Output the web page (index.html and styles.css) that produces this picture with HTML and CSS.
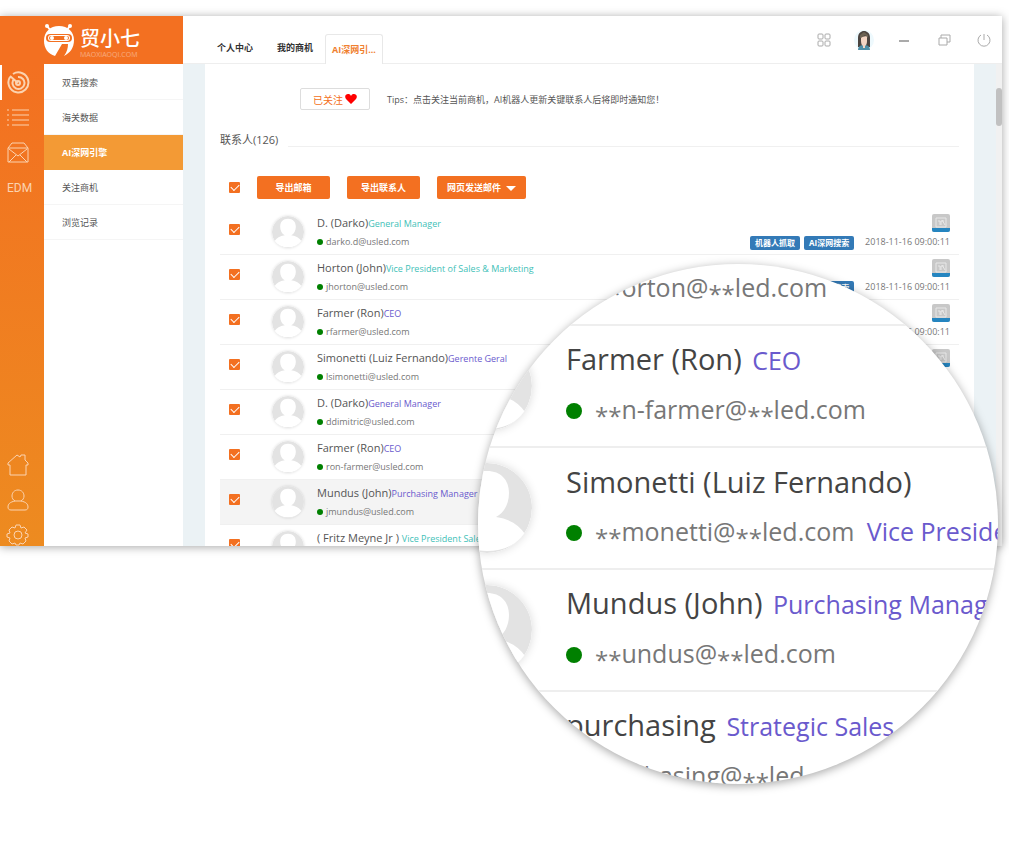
FILE: index.html
```html
<!DOCTYPE html>
<html lang="zh-CN">
<head>
  <meta charset="UTF-8" />
  <meta name="viewport" content="width=device-width, initial-scale=1.0"/>
  <title>贸小七</title>
  <link rel="stylesheet" href="styles.css">
</head>
<body>
  <!-- Shared symbols -->
  <svg class="symbols" aria-hidden="true">
    <symbol id="person" viewBox="0 0 90 90">
      <circle cx="45" cy="45" r="45" fill="#e3e3e3"/>
      <path d="M45 8c14 0 22 9 22 22 0 11-5 20-13 24 14 2 23 8 29 17-9 11-22 17-38 17S16 82 7 71c6-9 15-15 29-17-8-4-13-13-13-24C23 17 31 8 45 8z" fill="#fff"/>
    </symbol>
    <symbol id="card" viewBox="0 0 18 18">
      <rect width="18" height="18" rx="2" fill="#c8c8c8"/>
      <path d="M4 4h10v9H4zM6 7h2v4M10 6l3 5M9 11V7h3" fill="none" stroke="#e8e8e8"/>
      <path d="M0 14h18v2a2 2 0 0 1-2 2H2a2 2 0 0 1-2-2z" fill="#2585c0"/>
    </symbol>
  </svg>

  <div class="stage">
    <div class="app">
      <header class="topbar">
        <a class="logo" href="#">
          <svg width="34" height="34" viewBox="0 0 34 34" fill="#fff">
            <circle cx="5" cy="3" r="2"/>
            <circle cx="28" cy="3" r="2"/>
            <path d="M5 3l4 5M28 3l-4 5" stroke="#fff" stroke-width="2"/>
            <path d="M17 3c9 0 15 6 15 14 0 8-4 13-10 16 3-4 4-8 4-12h-6l-7 12C6 31 2 25 2 18 2 9 8 3 17 3z"/>
            <path d="M8 11h18a4 4 0 0 1 0 8H8a4 4 0 0 1 0-8z" fill="#f37021"/>
            <path d="M9 12h16a3 3 0 0 1 0 6H9a3 3 0 0 1 0-6z"/>
            <path d="M9 13h16a2 2 0 0 1 0 4H9a2 2 0 0 1 0-4z" fill="#f37021"/>
            <circle cx="10" cy="15" r="2"/>
            <circle cx="24" cy="15" r="2"/>
          </svg>
          <span class="logo-text">贸小七<small>MAOXIAOQI.COM</small></span>
        </a>
        <nav class="tabs">
          <a href="#">个人中心</a>
          <a href="#">我的商机</a>
          <a href="#" class="active">AI深网引...</a>
        </nav>
        <div class="tools">
          <button aria-label="应用">
            <svg width="14" height="14" viewBox="0 0 14 14"><rect x="1" y="1" width="5" height="5" rx="1"/><rect x="8" y="1" width="5" height="5" rx="1"/><rect x="1" y="8" width="5" height="5" rx="1"/><rect x="8" y="8" width="5" height="5" rx="1"/></svg>
          </button>
          <button aria-label="用户">
            <svg class="user" width="20" height="20" viewBox="0 0 20 20">
              <circle cx="10" cy="10" r="10" fill="#eef9fd"/>
              <path d="M4 8c0-5 3-7 6-7s6 2 6 7v9H4z" fill="#4b4440"/>
              <path d="M4 20c0-4 3-5 6-5s6 1 6 5z" fill="#4d8fa8"/>
              <path d="M9 12h2v6H9z" fill="#f3d5c4"/>
              <path d="M7 7l6-1v5c0 3-1 5-3 5s-3-2-3-5z" fill="#f3d5c4"/>
              <path d="M6 8c2 0 3-2 5-3 1 1 2 2 3 3V5l-4-3-4 3z" fill="#6b6253"/>
            </svg>
          </button>
          <button aria-label="最小化">
            <svg width="14" height="14" viewBox="0 0 14 14"><path d="M2 8h10" stroke-width="2"/></svg>
          </button>
          <button aria-label="还原">
            <svg width="14" height="14" viewBox="0 0 14 14"><path d="M2 5h8v7H2zM4 5V2h9v7h-3"/></svg>
          </button>
          <button aria-label="退出">
            <svg width="14" height="14" viewBox="0 0 14 14"><path d="M4 2a6 6 0 1 0 6 0M7 1v6"/></svg>
          </button>
        </div>
      </header>

      <div class="body">
        <nav class="rail">
          <a href="#" class="active" aria-label="搜索">
            <svg width="24" height="24" viewBox="0 0 24 24" stroke-width="2"><path d="M4 6a10 10 0 1 0 3-3M8 8a6 6 0 1 0 4-2M4 5l8 7"/><circle cx="12" cy="12" r="2"/></svg>
          </a>
          <a href="#" aria-label="列表">
            <svg width="24" height="24" viewBox="0 0 24 24"><path d="M1 4h2M6 4h17M1 9h2M6 9h17M1 14h2M6 14h17M1 19h2M6 19h17"/></svg>
          </a>
          <a href="#" aria-label="邮件">
            <svg width="24" height="24" viewBox="0 0 24 24"><path d="M2 7l4-5h12l4 5v14H2zM2 7h20M3 8l9 7 9-7M3 21l7-7M21 21l-7-7"/></svg>
          </a>
          <a href="#" class="edm">EDM</a>
          <a href="#" class="home" aria-label="首页">
            <svg width="24" height="24" viewBox="0 0 24 24"><path d="M4 12H2v-2l9-8 3 2 1-2h4v5l3 3v2h-2v10H4z"/></svg>
          </a>
          <a href="#" aria-label="账户">
            <svg width="24" height="24" viewBox="0 0 24 24"><path d="M12 2c4 0 6 3 6 6 0 2-1 4-3 5 5 1 7 3 7 6 0 2-1 3-3 3H5c-2 0-3-1-3-3 0-3 2-5 7-6-2-1-3-3-3-5 0-3 2-6 6-6zM9 13h6"/></svg>
          </a>
          <a href="#" aria-label="设置">
            <svg width="24" height="24" viewBox="0 0 24 24"><path d="M10 2h4l1 3 3-1 3 3-2 3 3 1v3l-3 1 1 3-3 3-3-1-1 2h-3l-1-2-3 1-3-3 1-3-3-1v-3l3-1-1-3 3-3 3 1z"/><circle cx="12" cy="12" r="4"/></svg>
          </a>
        </nav>

        <nav class="menu">
          <a href="#">双喜搜索</a>
          <a href="#">海关数据</a>
          <a href="#" class="active">AI深网引擎</a>
          <a href="#">关注商机</a>
          <a href="#">浏览记录</a>
        </nav>

        <main class="content">
          <section class="panel">
            <div class="follow">
              <button class="follow-btn">已关注<svg width="12" height="10" viewBox="0 0 12 10"><path d="M6 10L1 5C-1 2 1 0 3 0c1 0 2 0 3 2 1-2 2-2 3-2 2 0 4 2 2 5z" fill="#f00"/></svg></button>
              <p>Tips：点击关注当前商机，AI机器人更新关键联系人后将即时通知您！</p>
            </div>
            <h2>联系人(126)</h2>
            <div class="actions">
              <input type="checkbox" aria-label="全选" checked>
              <button>导出邮箱</button>
              <button>导出联系人</button>
              <button class="send">网页发送邮件<span class="caret"></span></button>
            </div>
            <ul class="contacts">
              <li>
                <input type="checkbox" aria-label="D. (Darko)" checked>
                <svg class="avatar"><use href="#person"/></svg>
                <div class="info">
                  <p class="name">D. (Darko)<span class="teal">General Manager</span></p>
                  <p class="mail">darko.d@usled.com</p>
                </div>
                <div class="tags"><span>机器人抓取</span><span>AI深网搜索</span></div>
                <div class="meta"><svg><use href="#card"/></svg><time>2018-11-16 09:00:11</time></div>
              </li>
              <li>
                <input type="checkbox" aria-label="Horton (John)" checked>
                <svg class="avatar"><use href="#person"/></svg>
                <div class="info">
                  <p class="name">Horton (John)<span class="teal">Vice President of Sales &amp; Marketing</span></p>
                  <p class="mail">jhorton@usled.com</p>
                </div>
                <div class="tags"><span>机器人抓取</span><span>AI深网搜索</span></div>
                <div class="meta"><svg><use href="#card"/></svg><time>2018-11-16 09:00:11</time></div>
              </li>
              <li>
                <input type="checkbox" aria-label="Farmer (Ron)" checked>
                <svg class="avatar"><use href="#person"/></svg>
                <div class="info">
                  <p class="name">Farmer (Ron)<span>CEO</span></p>
                  <p class="mail">rfarmer@usled.com</p>
                </div>
                <div class="meta"><svg><use href="#card"/></svg><time>2018-11-16 09:00:11</time></div>
              </li>
              <li>
                <input type="checkbox" aria-label="Simonetti (Luiz Fernando)" checked>
                <svg class="avatar"><use href="#person"/></svg>
                <div class="info">
                  <p class="name">Simonetti (Luiz Fernando)<span>Gerente Geral</span></p>
                  <p class="mail">lsimonetti@usled.com</p>
                </div>
                <div class="meta"><svg><use href="#card"/></svg></div>
              </li>
              <li>
                <input type="checkbox" aria-label="D. (Darko)" checked>
                <svg class="avatar"><use href="#person"/></svg>
                <div class="info">
                  <p class="name">D. (Darko)<span>General Manager</span></p>
                  <p class="mail">ddimitric@usled.com</p>
                </div>
              </li>
              <li>
                <input type="checkbox" aria-label="Farmer (Ron)" checked>
                <svg class="avatar"><use href="#person"/></svg>
                <div class="info">
                  <p class="name">Farmer (Ron)<span>CEO</span></p>
                  <p class="mail">ron-farmer@usled.com</p>
                </div>
              </li>
              <li class="selected">
                <input type="checkbox" aria-label="Mundus (John)" checked>
                <svg class="avatar"><use href="#person"/></svg>
                <div class="info">
                  <p class="name">Mundus (John)<span>Purchasing Manager</span></p>
                  <p class="mail">jmundus@usled.com</p>
                </div>
              </li>
              <li>
                <input type="checkbox" aria-label="Fritz Meyne Jr" checked>
                <svg class="avatar"><use href="#person"/></svg>
                <div class="info">
                  <p class="name">( Fritz Meyne Jr ) <span class="teal">Vice President Sales</span></p>
                </div>
              </li>
            </ul>
          </section>
          <div class="scrollbar"><div class="thumb"></div></div>
        </main>
      </div>
    </div>

    <!-- Magnifier over the contact list -->
    <div class="lens">
      <ul>
        <li>
          <svg class="avatar"><use href="#person"/></svg>
          <div class="info">
            <p class="mail"><i>**</i>orton@<i>**</i>led.com</p>
          </div>
        </li>
        <li>
          <svg class="avatar"><use href="#person"/></svg>
          <div class="info">
            <p class="name">Farmer (Ron) <span>CEO</span></p>
            <p class="mail"><i>**</i>n-farmer@<i>**</i>led.com</p>
          </div>
        </li>
        <li>
          <svg class="avatar"><use href="#person"/></svg>
          <div class="info">
            <p class="name">Simonetti (Luiz Fernando)</p>
            <p class="mail"><i>**</i>monetti@<i>**</i>led.com <span>Vice President</span></p>
          </div>
        </li>
        <li>
          <svg class="avatar"><use href="#person"/></svg>
          <div class="info">
            <p class="name">Mundus (John) <span>Purchasing Manager</span></p>
            <p class="mail"><i>**</i>undus@<i>**</i>led.com</p>
          </div>
        </li>
        <li>
          <svg class="avatar"><use href="#person"/></svg>
          <div class="info">
            <p class="name">purchasing <span>Strategic Sales</span></p>
            <p class="mail"><i>**</i>rchasing@<i>**</i>led</p>
          </div>
        </li>
      </ul>
    </div>
  </div>
</body>
</html>
```

FILE: styles.css
```css
* {
  box-sizing: border-box;
}

body {
  margin: 0;
  background: #fff;
  font-family: "Open Sans", "Noto Sans CJK SC", sans-serif;
  color: #555;
}

a {
  color: inherit;
  text-decoration: none;
}

p, h2, ul {
  margin: 0;
  padding: 0;
}

ul {
  list-style: none;
}

button {
  border: none;
  background: none;
  padding: 0;
  font-family: inherit;
  cursor: pointer;
}

.symbols {
  display: none;
}

.stage {
  position: relative;
  min-height: 100vh;
  padding: 16px 7px 0 0;
}

.app {
  display: flex;
  flex-direction: column;
  height: calc(100vh - 319px);
  min-height: 400px;
  overflow: hidden;
  background: #fff;
  box-shadow: 0 1px 9px rgba(0, 0, 0, 0.35);
}

/* Top bar */
.topbar {
  display: flex;
  flex: none;
  height: 48px;
}

.logo {
  display: flex;
  align-items: center;
  gap: 4px;
  width: 183px;
  padding-left: 42px;
  background: #f37021;
  color: #fff;
}

.logo-text {
  padding-top: 6px;
  font-size: 20px;
  font-weight: 500;
  line-height: 24px;
}

.logo-text small {
  display: block;
  font-size: 7px;
  font-weight: normal;
  line-height: 8px;
  opacity: 0.4;
}

.tabs {
  display: flex;
  flex: 1;
  align-items: flex-end;
  padding-left: 22px;
  border-bottom: 1px solid #eee;
  font-size: 9px;
  font-weight: bold;
  color: #333;
}

.tabs a {
  height: 30px;
  padding: 0 12px;
  line-height: 30px;
}

.tabs a.active {
  margin-bottom: -1px;
  padding: 0 6px;
  border: 1px solid #e8e8e8;
  border-bottom: none;
  border-radius: 3px 3px 0 0;
  background: #fff;
  color: #f08030;
}

.tools {
  display: flex;
  align-items: center;
  gap: 20px;
  padding-right: 8px;
  border-bottom: 1px solid #eee;
}

.tools button {
  display: flex;
  justify-content: center;
  width: 20px;
}

.tools svg {
  fill: none;
  stroke: #aaa;
}

.tools .user {
  stroke: none;
}

/* Left side */
.body {
  display: flex;
  flex: 1;
  min-height: 0;
}

.rail {
  display: flex;
  flex: none;
  flex-direction: column;
  width: 44px;
  padding-top: 1px;
  background: linear-gradient(#f37021, #ed8b20);
  color: #fbd3b0;
}

.rail a {
  display: flex;
  flex: none;
  align-items: center;
  height: 35px;
  padding-left: 6px;
}

.rail a.active {
  border-left: 2px solid #fff;
  padding-left: 4px;
}

.rail svg {
  fill: none;
  stroke: currentColor;
}

.rail .edm {
  padding-left: 7px;
  font-family: Roboto, sans-serif;
  font-size: 12px;
}

.rail .home {
  margin-top: auto;
}

.rail a:last-child {
  margin-bottom: -6px;
}

.menu {
  flex: none;
  width: 139px;
  padding-top: 1px;
  font-size: 9px;
}

.menu a {
  display: block;
  height: 35px;
  padding-left: 18px;
  border-bottom: 1px solid #f5f5f5;
  line-height: 35px;
}

.menu a.active {
  border-color: #f39a35;
  background: #f39a35;
  color: #fff;
  font-weight: bold;
}

/* Content */
.content {
  display: flex;
  flex: 1;
  min-width: 0;
  padding-left: 22px;
  background: #ebf2f5;
}

.panel {
  flex: 1;
  min-width: 0;
  padding: 24px 15px 0;
  background: #fff;
}

.scrollbar {
  flex: none;
  width: 6px;
  margin-left: 22px;
  padding-top: 24px;
  background: #f1f1f1;
}

.thumb {
  height: 38px;
  border-radius: 3px;
  background: #c1c1c1;
}

.follow {
  display: flex;
  align-items: center;
  gap: 17px;
  padding-left: 80px;
  font-size: 9px;
}

.follow-btn {
  display: flex;
  align-items: center;
  justify-content: center;
  gap: 2px;
  width: 70px;
  height: 22px;
  border: 1px solid #ddd;
  border-radius: 2px;
  color: #f37021;
  font-size: 10px;
}

.panel h2 {
  display: flex;
  align-items: center;
  gap: 10px;
  margin-top: 20px;
  font-size: 11px;
  line-height: 20px;
  font-weight: normal;
}

.panel h2::after {
  content: "";
  flex: 1;
  align-self: flex-end;
  height: 1px;
  margin-bottom: 3px;
  background: #f0f0f0;
}

.actions {
  display: flex;
  align-items: center;
  padding: 26px 0 11px 9px;
}

.actions button {
  width: 73px;
  height: 23px;
  margin-left: 17px;
  border-radius: 2px;
  background: #f37021;
  color: #fff;
  font-size: 9px;
  font-weight: bold;
}

.actions .send {
  width: 89px;
}

.caret {
  display: inline-block;
  margin-left: 5px;
  border: 5px solid transparent;
  border-top-color: #fff;
  border-bottom: none;
}

input[type="checkbox"] {
  display: flex;
  flex: none;
  align-items: center;
  justify-content: center;
  appearance: none;
  width: 11px;
  height: 11px;
  margin: 0;
  border-radius: 1px;
  background: #f37021;
}

input[type="checkbox"]::after {
  content: "";
  width: 7px;
  height: 4px;
  margin-bottom: 2px;
  border: solid #fff;
  border-width: 0 0 1px 1px;
  transform: rotate(-45deg);
}

.contacts li {
  display: flex;
  align-items: center;
  height: 45px;
  padding: 0 9px;
  border-bottom: 1px solid #f0f0f0;
}

.contacts input {
  margin-bottom: 6px;
}

.contacts .selected {
  background: #f4f4f4;
}

.avatar {
  flex: none;
  border-radius: 50%;
}

.contacts .avatar {
  width: 32px;
  height: 32px;
  margin: 0 13px 0 32px;
  box-shadow: 0 0 3px rgba(0, 0, 0, 0.15);
}

.info {
  flex: 1;
  white-space: nowrap;
}

.info span {
  color: #6a5acd;
}

.info .teal {
  color: #3fc1b8;
}

.contacts .info {
  align-self: flex-start;
  padding-top: 4px;
}

.contacts .name {
  font-size: 11px;
  line-height: 18px;
}

.contacts .name span {
  font-size: 9px;
}

.mail::before {
  content: "";
  display: inline-block;
  border-radius: 50%;
  background: #008000;
}

.contacts .mail {
  color: #777;
  font-size: 9px;
  line-height: 18px;
}

.contacts .mail::before {
  width: 6px;
  height: 6px;
  margin-right: 3px;
}

.tags {
  display: flex;
  align-self: flex-end;
  gap: 4px;
  margin: 0 11px 4px 0;
}

.tags span {
  width: 50px;
  border-radius: 2px;
  background: #337ab7;
  color: #fff;
  font-size: 8px;
  font-weight: bold;
  line-height: 14px;
  text-align: center;
}

.meta {
  display: flex;
  flex-direction: column;
  align-items: flex-end;
  align-self: flex-start;
  padding-top: 4px;
  color: #777;
  font-size: 9px;
}

.meta svg {
  width: 18px;
  height: 18px;
}

.meta time {
  line-height: 20px;
}

/* Magnifier */
.lens {
  position: absolute;
  top: 264px;
  right: 11px;
  width: 520px;
  height: 520px;
  overflow: hidden;
  border-radius: 50%;
  background: #fff;
  box-shadow: 0 2px 10px rgba(0, 0, 0, 0.35);
}

.lens ul {
  margin: -60px 0 0 -36px;
}

.lens li {
  display: flex;
  align-items: center;
  gap: 34px;
  height: 122px;
  border-bottom: 2px solid #eee;
}

.lens .info {
  align-self: flex-end;
  padding-bottom: 12px;
}

.lens .avatar {
  width: 90px;
  height: 90px;
  box-shadow: 0 0 10px rgba(0, 0, 0, 0.15);
}

.lens .name {
  color: #444;
  font-size: 29px;
  line-height: 48px;
}

.lens .name span {
  margin-left: 3px;
  font-size: 25px;
}

.lens .mail {
  color: #777;
  font-size: 25px;
  line-height: 50px;
}

.lens .mail::before {
  width: 16px;
  height: 16px;
  margin-right: 13px;
}

.lens .mail span {
  margin-left: 6px;
}

.lens .mail i {
  font-size: 24px;
  font-style: normal;
  line-height: 1;
  vertical-align: sub;
}
```
